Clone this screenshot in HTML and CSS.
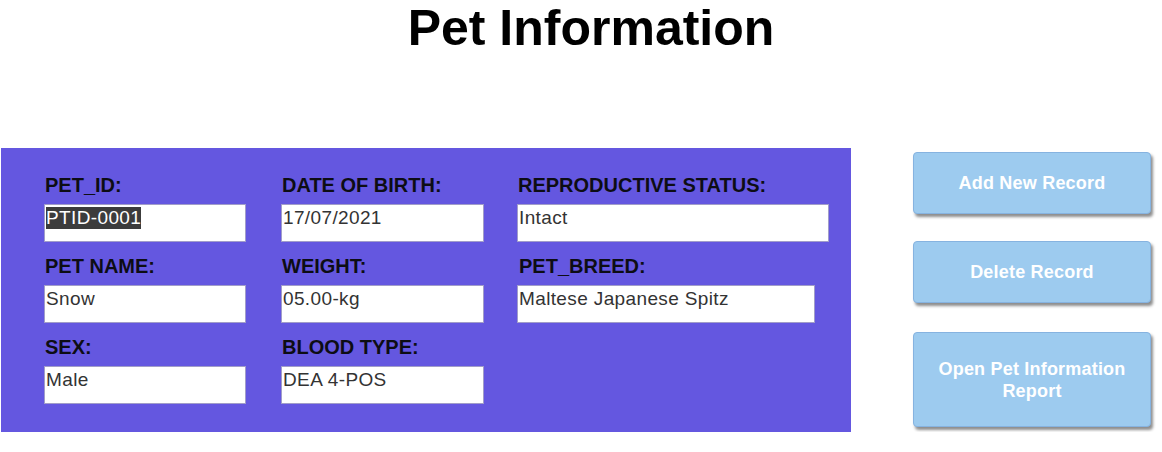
FILE: index.html
```html
<!DOCTYPE html>
<html>
<head>
<meta charset="utf-8">
<link rel="stylesheet" href="styles.css">
</head>
<body>
<h1 class="title">Pet Information</h1>
<div class="main">
  <div class="panel">
    <div class="field">
      <div class="label">PET_ID:</div>
      <div class="input w202"><span class="sel">PTID-0001</span></div>
    </div>
    <div class="field">
      <div class="label">DATE OF BIRTH:</div>
      <div class="input w203">17/07/2021</div>
    </div>
    <div class="field">
      <div class="label">REPRODUCTIVE STATUS:</div>
      <div class="input w312">Intact</div>
    </div>
    <div class="field">
      <div class="label">PET NAME:</div>
      <div class="input w202">Snow</div>
    </div>
    <div class="field">
      <div class="label">WEIGHT:</div>
      <div class="input w203">05.00-kg</div>
    </div>
    <div class="field">
      <div class="label lbl-breed">PET_BREED:</div>
      <div class="input w298">Maltese Japanese Spitz</div>
    </div>
    <div class="field">
      <div class="label">SEX:</div>
      <div class="input w202">Male</div>
    </div>
    <div class="field">
      <div class="label">BLOOD TYPE:</div>
      <div class="input w203">DEA 4-POS</div>
    </div>
  </div>
  <div class="actions">
    <button class="btn">Add New Record</button>
    <button class="btn btn-del">Delete Record</button>
    <button class="btn btn-tall">Open Pet Information<br>Report</button>
  </div>
</div>
</body>
</html>
```
FILE: styles.css
```css
html, body {
  margin: 0;
  padding: 0;
  background: #ffffff;
  font-family: "Liberation Sans", Arial, sans-serif;
}
.title {
  margin: 0;
  padding-left: 20px;
  text-align: center;
  font-size: 50px;
  font-weight: bold;
  line-height: 57px;
  color: #000;
}
.main {
  display: flex;
  align-items: flex-start;
  margin-top: 91px;
  padding-left: 1px;
}
.panel {
  width: 850px;
  height: 284px;
  box-sizing: border-box;
  background: #6457e0;
  padding: 26px 0 0 43px;
  display: grid;
  grid-template-columns: 237px 236px 1fr;
  grid-auto-rows: 81px;
  align-content: start;
}
.field {
  display: flex;
  flex-direction: column;
}
.label {
  font-size: 20px;
  font-weight: bold;
  line-height: 23px;
  color: #0d0d14;
  padding-left: 1px;
  margin-bottom: 7px;
  white-space: nowrap;
}
.lbl-breed {
  padding-left: 2px;
}
.input {
  height: 38px;
  box-sizing: border-box;
  background: #ffffff;
  border: 1px solid #a19dc9;
  padding: 2px 0 0 1px;
  font-size: 19px;
  letter-spacing: 0.37px;
  line-height: 22px;
  color: #333333;
  white-space: nowrap;
}
.sel {
  background: #3c3c3c;
  color: #ffffff;
  display: inline-block;
}
.w202 { width: 202px; }
.w203 { width: 203px; }
.w312 { width: 312px; }
.w298 { width: 298px; }
.actions {
  display: flex;
  flex-direction: column;
  margin-left: 62px;
  margin-top: 4px;
}
.btn {
  width: 238px;
  height: 62px;
  box-sizing: border-box;
  background: #9dcbef;
  border: 1px solid #86b3e0;
  border-radius: 4px;
  box-shadow: 2px 3px 3px rgba(0, 0, 0, 0.45);
  color: #ffffff;
  font-family: "Liberation Sans", Arial, sans-serif;
  font-size: 18px;
  letter-spacing: 0.2px;
  font-weight: bold;
  line-height: 22px;
  padding: 0;
  margin-bottom: 27px;
}
.btn-del {
  margin-bottom: 29px;
}
.btn-tall {
  height: 95px;
  margin-bottom: 0;
}
```
